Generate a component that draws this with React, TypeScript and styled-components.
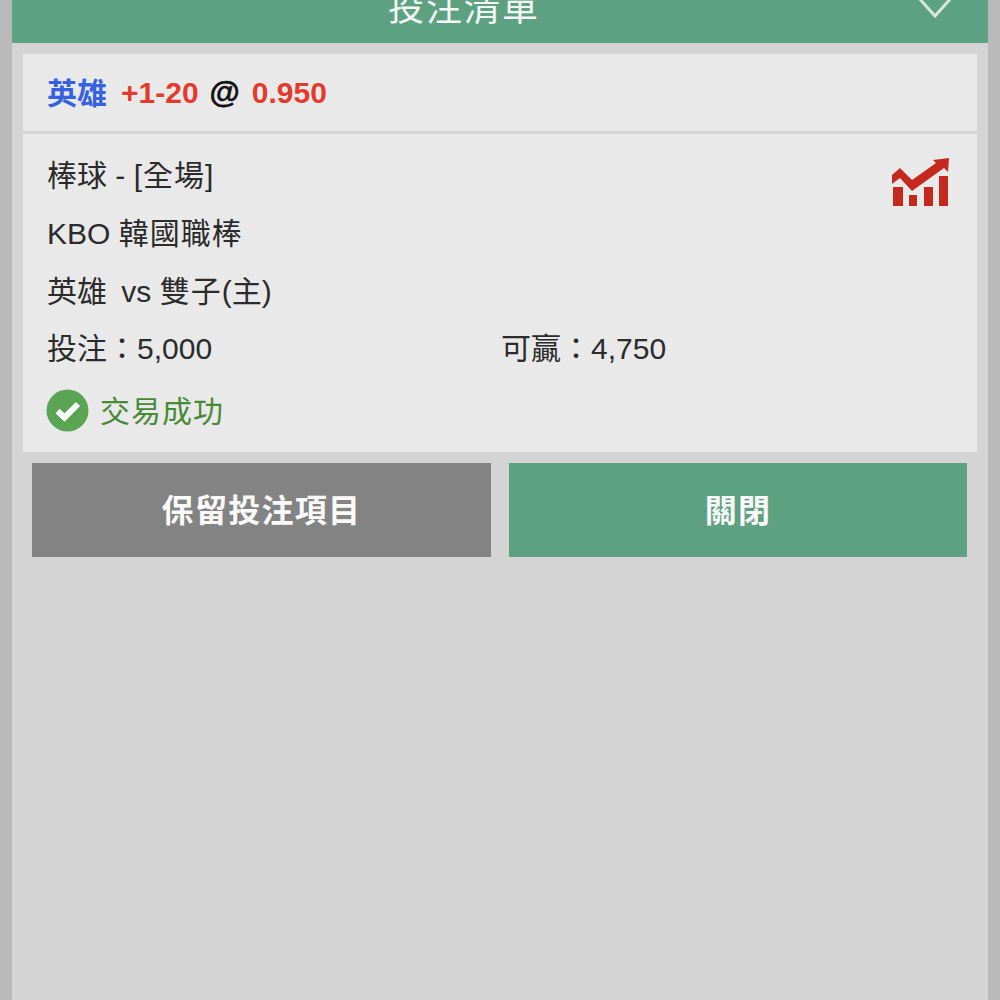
import React from "react";
import styled, { createGlobalStyle } from "styled-components";

const GlobalStyle = createGlobalStyle`
  html, body {
    margin: 0;
    padding: 0;
    height: 100%;
    background: #b9b9b9;
    overflow: hidden;
  }
  #root {
    height: 100%;
  }
`;

const FONT = `"Liberation Sans", "Noto Sans CJK TC", sans-serif`;

const Page = styled.div`
  width: 1000px;
  height: 1000px;
  padding: 0 12px;
  box-sizing: border-box;
  background: #b9b9b9;
  font-family: ${FONT};
`;

const Panel = styled.div`
  height: 100%;
  background: #d4d4d4;
  display: flex;
  flex-direction: column;
`;

const Header = styled.header`
  height: 43px;
  flex: none;
  background: #5ea182;
  display: flex;
  align-items: flex-end;
  overflow: hidden;
`;

const HeaderTitle = styled.div`
  margin-left: 376px;
  width: 150px;
  height: 68px;
  line-height: 68px;
  white-space: nowrap;
  font-size: 36px;
  letter-spacing: 2px;
  color: #f2f7f4;
  flex: none;
`;

const Chevron = styled.svg`
  margin-left: 378px;
  margin-bottom: 24px;
  flex: none;
`;

const Cards = styled.div`
  margin: 11px 11px 0;
  display: flex;
  flex-direction: column;
  gap: 3px;
`;

const PickCard = styled.div`
  height: 77px;
  background: #e9e9e9;
  padding: 0 24px;
  display: flex;
  align-items: center;
  gap: 12px;
  font-size: 30px;
  font-weight: 700;
`;

const Mark = styled.span<{ $color: string }>`
  color: ${(p) => p.$color};
`;

const Name = styled(Mark)`
  margin-right: 2px;
  margin-top: -4px;
`;

const At = styled(Mark)`
  margin-left: -1px;
  font-size: 31px;
  -webkit-text-stroke: 0.5px #111111;
`;

const DetailCard = styled.div`
  position: relative;
  height: 318px;
  box-sizing: border-box;
  background: #e9e9e9;
  padding: 13px 24px 0;
  display: flex;
  flex-direction: column;
  font-size: 30px;
  color: #2b2b2b;
`;

const Row = styled.div`
  height: 58px;
  line-height: 58px;
  white-space: nowrap;
`;

const WideText = styled.span`
  letter-spacing: 1px;
`;

const TeamGap = styled.span`
  margin-left: 6px;
`;

const AmountRow = styled(Row)`
  height: 55px;
  line-height: 55px;
  display: grid;
  grid-template-columns: 454px 1fr;
`;

const TrendIcon = styled.svg`
  position: absolute;
  top: 24px;
  right: 27px;
`;

const Status = styled.div`
  margin-top: 13px;
  margin-left: -1px;
  display: flex;
  align-items: center;
  gap: 11px;
  font-size: 30px;
  letter-spacing: 1px;
  color: #478a36;
`;

const StatusLabel = styled.span`
  margin-top: -3px;
`;

const ActionButton = styled.button<{ $tone: "grey" | "green" }>`
  height: 94px;
  border: none;
  padding: 0 0 5px;
  background: ${(p) => (p.$tone === "grey" ? "#838383" : "#5ea182")};
  color: #fafafa;
  font-family: ${FONT};
  font-size: 32px;
  font-weight: 700;
  letter-spacing: 1.3px;
`;

const Actions = styled.div`
  margin: 11px 21px 0 20px;
  display: grid;
  grid-template-columns: 459px 458px;
  column-gap: 18px;
`;

export default function App() {
  return (
    <>
      <GlobalStyle />
      <Page>
        <Panel>
          <Header>
            <HeaderTitle>投注清單</HeaderTitle>
            <Chevron width="38" height="24" viewBox="0 0 38 24">
              <path d="M2 2 L19 21 L36 2" fill="none" stroke="#d5e8dd" strokeWidth="3" />
            </Chevron>
          </Header>

          <Cards>
            <PickCard>
              <Name $color="#3661e0">英雄</Name>
              <Mark $color="#e33b2e">+1-20</Mark>
              <At $color="#111111">@</At>
              <Mark $color="#e33b2e">0.950</Mark>
            </PickCard>

            <DetailCard>
              <Row>棒球 - <WideText>[全場]</WideText></Row>
              <Row>KBO <WideText>韓國職棒</WideText></Row>
              <Row>英雄<TeamGap>&nbsp;vs</TeamGap> <WideText>雙子</WideText>(主)</Row>
              <AmountRow>
                <span>投注：5,000</span>
                <span>可贏：4,750</span>
              </AmountRow>
              <Status>
                <svg width="43" height="43" viewBox="0 0 43 43">
                  <circle cx="21.5" cy="21.5" r="21" fill="#5aa554" />
                  <path d="M11.5 22 L18.5 28.5 L32 15" fill="none" stroke="#ffffff" strokeWidth="6" />
                </svg>
                <StatusLabel>交易成功</StatusLabel>
              </Status>
              <TrendIcon width="58" height="50" viewBox="0 0 58 50">
                <g fill="#c5281c">
                  <path d="M0 17 L8 10 L20 22 L44 5 L41 2 L57 0 L56 14 L52 10 L20 33 L8 20 L0 26 Z" />
                  <rect x="1" y="29" width="10" height="19" />
                  <rect x="17" y="37" width="8" height="11" />
                  <rect x="32" y="29" width="9" height="19" />
                  <rect x="47" y="18" width="9" height="30" />
                </g>
              </TrendIcon>
            </DetailCard>
          </Cards>

          <Actions>
            <ActionButton $tone="grey">保留投注項目</ActionButton>
            <ActionButton $tone="green">關閉</ActionButton>
          </Actions>
        </Panel>
      </Page>
    </>
  );
}
